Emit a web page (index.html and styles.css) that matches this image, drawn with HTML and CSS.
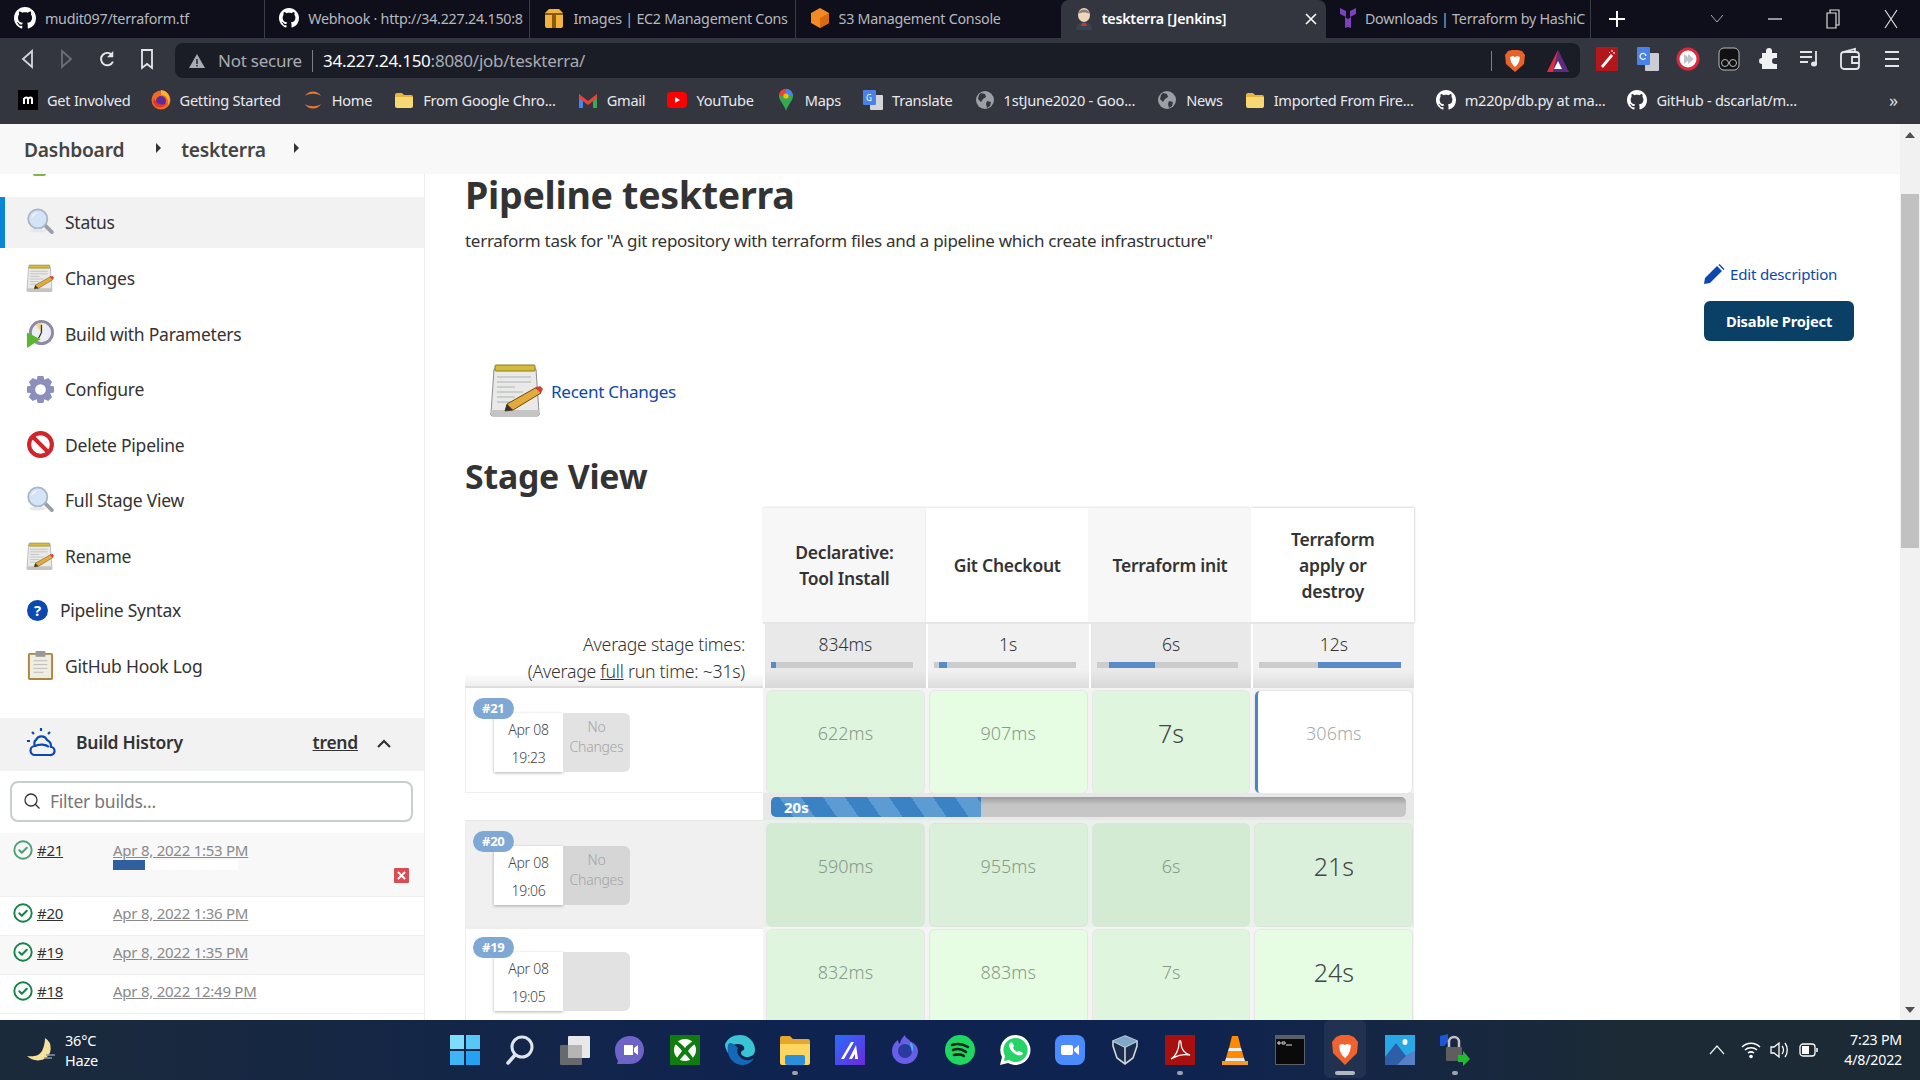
FILE: index.html
```html
<!DOCTYPE html>
<html lang="en">
<head>
<meta charset="utf-8">
<title>teskterra [Jenkins]</title>
<link rel="stylesheet" href="styles.css">
</head>
<body>
<svg class="sprite" xmlns="http://www.w3.org/2000/svg">
  <symbol id="gh" viewBox="0 0 16 16"><path fill="#fff" d="M8 0C3.58 0 0 3.58 0 8c0 3.54 2.29 6.53 5.47 7.59.4.07.55-.17.55-.38 0-.19-.01-.82-.01-1.49-2.01.37-2.53-.49-2.69-.94-.09-.23-.48-.94-.82-1.13-.28-.15-.68-.52-.01-.53.63-.01 1.08.58 1.23.82.72 1.21 1.87.87 2.33.66.07-.52.28-.87.51-1.07-1.78-.2-3.64-.89-3.64-3.95 0-.87.31-1.59.82-2.15-.08-.2-.36-1.02.08-2.12 0 0 .67-.21 2.2.82.64-.18 1.32-.27 2-.27.68 0 1.36.09 2 .27 1.53-1.04 2.2-.82 2.2-.82.44 1.1.16 1.92.08 2.12.51.56.82 1.27.82 2.15 0 3.07-1.87 3.75-3.65 3.95.29.25.54.73.54 1.48 0 1.07-.01 1.93-.01 2.2 0 .21.15.46.55.38A8.013 8.013 0 0016 8c0-4.42-3.58-8-8-8z"/></symbol>
  <symbol id="folder" viewBox="0 0 20 20"><path fill="#e8b63e" d="M1 5a2 2 0 012-2h5l2 2h7a2 2 0 012 2v1H1z"/><path fill="#f8d775" d="M1 7h18v9a2 2 0 01-2 2H3a2 2 0 01-2-2z"/></symbol>
  <symbol id="globe" viewBox="0 0 20 20"><circle cx="10" cy="10" r="9" fill="#9aa0a6"/><path fill="#33363f" d="M6 3l4 1 1 3-3 2-2 3-3-3 1-4zM12 11l4 1-1 4-3 2-1-4z"/></symbol>
  <symbol id="magnifier" viewBox="0 0 32 32"><path d="M19 20l3-3 8 8c1 1 1 2 0 3s-2 1-3 0z" fill="#9a9fa8"/><circle cx="13" cy="12" r="10.5" fill="#d4e4f7" stroke="#a8b6c8" stroke-width="2"/><path d="M6 11a7 7 0 017-6c-3 2-5 3-7 6z" fill="#fff"/><ellipse cx="13" cy="25" rx="9" ry="2" fill="#e8e8e8"/></symbol>
  <symbol id="notepad" viewBox="0 0 56 56"><path d="M5 6h42l3 44a2 2 0 01-2 3H4a2 2 0 01-2-3z" fill="#e9e9e7" stroke="#8c8c8c"/><path d="M2 47h48v4a2 2 0 01-2 2H4a2 2 0 01-2-2z" fill="#c4c4c4"/><rect x="6" y="2" width="40" height="6" rx="1" fill="#d4bb3a" stroke="#8c7a20"/><path d="M8 14h34M8 19h34M8 24h18M8 29h26M8 34h18M8 39h14" stroke="#aeb2b6" stroke-width="1.2"/><path d="M18 41l30-17 4 6-28 17-8 1z" fill="#e2ab3b" stroke="#6a4b12"/><path d="M46 25l5-2 3 3-2 4z" fill="#d93a32"/><path d="M16 48l2-7 6 6z" fill="#333"/></symbol>
  <symbol id="check" viewBox="0 0 20 20"><circle cx="10" cy="10" r="8.7" fill="none" stroke="#138347" stroke-width="1.9"/><path d="M6.3 10.3l2.5 2.5 5-5" fill="none" stroke="#138347" stroke-width="2" stroke-linecap="round" stroke-linejoin="round"/></symbol>
</svg>

<header class="chrome">
  <div class="tabs">
    <div class="tab"><svg class="fav" width="22" height="22"><use href="#gh"/></svg><span class="tab-title">mudit097/terraform.tf</span></div>
    <div class="tab"><svg class="fav" width="20" height="20"><use href="#gh"/></svg><span class="tab-title">Webhook · http://34.227.24.150:8</span></div>
    <div class="tab"><svg class="fav" width="20" height="22" viewBox="0 0 20 22"><path fill="#f2b33d" d="M1 6l4-4h10l4 4v13a2 2 0 01-2 2H3a2 2 0 01-2-2z"/><path fill="#8a5a12" d="M8 6h4v15H8zM1 6h18v2H1z"/></svg><span class="tab-title">Images | EC2 Management Cons</span></div>
    <div class="tab"><svg class="fav" width="20" height="22" viewBox="0 0 20 22"><path fill="#f28a24" d="M10 1l9 5v10l-9 5-9-5V6z"/><path fill="#d96a10" d="M10 11l9-5v10l-9 5z"/></svg><span class="tab-title">S3 Management Console</span></div>
    <div class="tab tab-active"><svg class="fav" width="18" height="22" viewBox="0 0 18 22"><ellipse cx="9" cy="7" rx="6" ry="7" fill="#f0d6b8"/><path d="M3 6c1-6 11-6 12 0-3-2-9-2-12 0z" fill="#8a8078"/><path d="M1 22c0-6 4-8 8-8s8 2 8 8z" fill="#39424f"/><path d="M7 15h4l1 3H6z" fill="#c8383a"/></svg><span class="tab-title tab-title-active">teskterra [Jenkins]</span><svg class="tab-close" width="12" height="12" viewBox="0 0 12 12"><path d="M1 1l10 10M11 1L1 11" stroke="#fff" stroke-width="1.6"/></svg></div>
    <div class="tab"><svg class="fav" width="16" height="22" viewBox="0 0 16 22"><path fill="#7b42bc" d="M0 1l6 3v6L0 7zM16 1l-6 3v6l6-3zM5 10l3 2 3-2v11l-3-1-3 1z"/></svg><span class="tab-title">Downloads | Terraform by HashiC</span></div>
    <div class="tab-new"><svg width="18" height="18" viewBox="0 0 18 18"><path d="M9 1v16M1 9h16" stroke="#fff" stroke-width="2"/></svg></div>
    <div class="win-controls">
      <svg class="wc" width="14" height="10" viewBox="0 0 14 10"><path d="M1 1l6 7 6-7" fill="none" stroke="#aaa"/></svg>
      <svg class="wc" width="14" height="10" viewBox="0 0 14 10"><path d="M0 5h14" stroke="#ddd" stroke-width="1.3"/></svg>
      <svg class="wc" width="14" height="22" viewBox="0 0 14 22"><path d="M1 5h9v15H1zM4 5V2h9v15h-3" fill="none" stroke="#ddd" stroke-width="1.2"/></svg>
      <svg class="wc" width="14" height="22" viewBox="0 0 14 22"><path d="M1 2l12 18M13 2L1 20" stroke="#ddd" stroke-width="1.2"/></svg>
    </div>
  </div>

  <div class="toolbar">
    <div class="nav">
      <svg width="12" height="20" viewBox="0 0 12 20"><path d="M11 2L2 10l9 8z" fill="none" stroke="#d5d7dc" stroke-width="1.8"/></svg>
      <svg width="12" height="20" viewBox="0 0 12 20"><path d="M1 2l9 8-9 8z" fill="none" stroke="#6c6f78" stroke-width="1.8"/></svg>
      <svg width="18" height="20" viewBox="0 0 18 20"><path d="M15 6a7 7 0 10.7 7" fill="none" stroke="#e5e6ea" stroke-width="2.2"/><path d="M16 1v7h-7z" fill="#e5e6ea"/></svg>
      <svg width="14" height="22" viewBox="0 0 14 22"><path d="M2 2h10v18l-5-4-5 4z" fill="none" stroke="#e5e6ea" stroke-width="1.8"/></svg>
    </div>
    <div class="omnibox">
      <svg width="16" height="16" viewBox="0 0 16 16"><path d="M8 1l8 14H0z" fill="#a9acb2"/><path d="M7.3 6h1.4v5H7.3zM7.3 12h1.4v1.4H7.3z" fill="#1b1d26"/></svg>
      <span class="not-secure">Not secure</span>
      <span class="omni-sep"></span>
      <span class="url"><span class="url-host">34.227.24.150</span>:8080/job/teskterra/</span>
      <span class="omni-sep omni-sep-right"></span>
      <svg class="brave" width="20" height="24" viewBox="0 0 20 24"><path d="M3 2l4-1h6l4 1 3 4-1 9-9 8-9-8-1-9z" fill="#e8622a"/><path d="M5 8l3-1 2 1 2-1 3 1-1 5-2 3-2 2-2-2-2-3z" fill="#fff"/></svg>
      <svg width="22" height="24" viewBox="0 0 22 24"><path d="M11 1l11 22H0z" fill="#5a2d7f"/><path d="M11 1L0 23h6z" fill="#e12d3e"/><path d="M11 12l4 8H7z" fill="#fff"/></svg>
    </div>
    <div class="ext">
      <svg width="22" height="24" viewBox="0 0 22 24"><rect width="22" height="24" rx="1" fill="#b3161b"/><path d="M5 19L15 7l2 2L7 21z" fill="#fff"/><path d="M16 3v2M19 6h-2M13 5l1 1" stroke="#fff"/></svg>
      <svg width="22" height="24" viewBox="0 0 22 24"><rect x="8" y="6" width="14" height="18" rx="1" fill="#c9ccd2"/><rect width="13" height="18" rx="1" fill="#4a82e8"/><path d="M9 9a3 3 0 10-.5 2" fill="none" stroke="#fff" stroke-width="1.2"/></svg>
      <svg width="22" height="24" viewBox="0 0 22 24"><circle cx="11" cy="12" r="10" fill="#fff" stroke="#d82c3e" stroke-width="3"/><path d="M7 7l6 5-6 5zM11 7l6 5-6 5z" fill="#c0c3c9"/></svg>
      <svg width="22" height="24" viewBox="0 0 22 24"><rect x="1" y="1" width="20" height="22" rx="5" fill="#111" stroke="#b7bac0"/><circle cx="7" cy="16" r="3.5" fill="none" stroke="#b7bac0"/><circle cx="15" cy="16" r="3.5" fill="none" stroke="#b7bac0"/></svg>
      <svg width="20" height="22" viewBox="0 0 20 22"><path d="M7 3a3 3 0 016 0v2h5v5h-2a3 3 0 000 6h2v5H3v-5a3 3 0 010-6V5h4z" fill="#f0f1f3"/></svg>
      <svg width="20" height="20" viewBox="0 0 20 20"><path d="M0 3h12M0 8h12M0 13h8" stroke="#e5e6ea" stroke-width="1.8"/><path d="M16 2v13" stroke="#e5e6ea" stroke-width="1.8"/><ellipse cx="14" cy="15" rx="3" ry="2.5" fill="#e5e6ea"/></svg>
      <svg width="20" height="22" viewBox="0 0 20 22"><rect x="1" y="4" width="18" height="17" rx="3" fill="none" stroke="#e5e6ea" stroke-width="1.8"/><path d="M3 4l12-3v3M19 9h-7v6h7" fill="none" stroke="#e5e6ea" stroke-width="1.8"/></svg>
    </div>
    <svg class="menu" width="14" height="20" viewBox="0 0 14 20"><path d="M0 3h14M0 10h14M0 17h14" stroke="#e5e6ea" stroke-width="1.8"/></svg>
  </div>

  <nav class="bookmarks">
    <div class="bm"><svg class="bm-ic" width="20" height="20" viewBox="0 0 20 20"><rect width="20" height="20" fill="#000"/><path d="M4 14V8m0 1c1-2 4-2 4 0v5m0-5c1-2 4-2 4 0v5" transform="translate(2 0)" fill="none" stroke="#fff" stroke-width="2"/></svg><span>Get Involved</span></div>
    <div class="bm"><svg class="bm-ic" width="20" height="22" viewBox="0 0 20 22"><circle cx="10" cy="11" r="9.5" fill="#f26a25"/><path d="M10 1a9.5 9.5 0 017 15c1-6-2-10-7-10z" fill="#ffb02e"/><circle cx="10" cy="12" r="5" fill="#5a2d9f"/><path d="M3 9c2 6 8 8 13 5-3 6-12 6-14-1z" fill="#e0362f"/></svg><span>Getting Started</span></div>
    <div class="bm"><svg class="bm-ic" width="20" height="22" viewBox="0 0 20 22"><path d="M2 7c3-6 13-6 16 0-4-3-12-3-16 0zM2 15c4 3 12 3 16 0-3 6-13 6-16 0z" fill="#e5772f"/></svg><span>Home</span></div>
    <div class="bm"><svg class="bm-ic" width="20" height="20"><use href="#folder"/></svg><span>From Google Chro...</span></div>
    <div class="bm"><svg class="bm-ic" width="20" height="16" viewBox="0 0 20 16"><path d="M1 2v14h4V7z" fill="#4285f4"/><path d="M19 2v14h-4V7z" fill="#34a853"/><path d="M1 2l9 7 9-7v4l-9 7-9-7z" fill="#ea4335"/></svg><span>Gmail</span></div>
    <div class="bm"><svg class="bm-ic" width="20" height="16" viewBox="0 0 20 16"><rect width="20" height="16" rx="4" fill="#f00"/><path d="M8 5l5 3-5 3z" fill="#fff"/></svg><span>YouTube</span></div>
    <div class="bm"><svg class="bm-ic" width="20" height="22" viewBox="-3 0 20 22"><path d="M7 0a7 7 0 017 7c0 5-5 8-7 15C5 15 0 12 0 7a7 7 0 017-7z" fill="#34a853"/><path d="M0 7a7 7 0 0112-5L7 7z" fill="#ea4335"/><path d="M7 0a7 7 0 017 7H7z" fill="#4285f4"/><circle cx="7" cy="7" r="2.6" fill="#fbbc04"/></svg><span>Maps</span></div>
    <div class="bm"><svg class="bm-ic" width="20" height="20" viewBox="0 0 20 20"><rect x="7" y="5" width="13" height="15" rx="1" fill="#d2d5da"/><rect width="13" height="15" rx="1" fill="#4a82e8"/><text x="3" y="11" class="svg-g">G</text></svg><span>Translate</span></div>
    <div class="bm"><svg class="bm-ic" width="20" height="20"><use href="#globe"/></svg><span>1stJune2020 - Goo...</span></div>
    <div class="bm"><svg class="bm-ic" width="20" height="20"><use href="#globe"/></svg><span>News</span></div>
    <div class="bm"><svg class="bm-ic" width="20" height="20"><use href="#folder"/></svg><span>Imported From Fire...</span></div>
    <div class="bm"><svg class="bm-ic" width="20" height="22"><use href="#gh"/></svg><span>m220p/db.py at ma...</span></div>
    <div class="bm"><svg class="bm-ic" width="20" height="22"><use href="#gh"/></svg><span>GitHub - dscarlat/m...</span></div>
    <div class="bm-more">»</div>
  </nav>
</header>

<div class="viewport">
  <div class="page">
    <div class="breadcrumb">
      <a class="crumb">Dashboard</a><span class="crumb-arrow"></span>
      <a class="crumb">teskterra</a><span class="crumb-arrow"></span>
    </div>
    <div class="content">
      <aside class="sidebar">
        <div class="sliver"></div>
        <ul class="tasks">
          <li class="task task-active"><svg class="task-ic" viewBox="0 0 32 32"><use href="#magnifier"/></svg>Status</li>
          <li class="task"><svg class="task-ic" viewBox="0 0 56 56"><use href="#notepad"/></svg>Changes</li>
          <li class="task"><svg class="task-ic" viewBox="0 0 30 30"><circle cx="16" cy="14" r="13" fill="#8d8aa5"/><circle cx="16" cy="14" r="10" fill="#eeedf3"/><path d="M16 14V4a10 10 0 00-6 2z" fill="#f2d77c"/><path d="M16 14l-3 6M16 14V6" stroke="#333" stroke-width="1.3"/><path d="M1 14l14 7-14 9z" fill="#5bb52e"/></svg>Build with Parameters</li>
          <li class="task"><svg class="task-ic" viewBox="0 0 30 30"><path d="M12 1h6l1 4 4-2 4 4-2 4 4 1v6l-4 1 2 4-4 4-4-2-1 4h-6l-1-4-4 2-4-4 2-4-4-1v-6l4-1-2-4 4-4 4 2z" fill="#8a90bb"/><circle cx="15" cy="15" r="5.5" fill="#fff"/></svg>Configure</li>
          <li class="task"><svg class="task-ic" viewBox="0 0 28 28"><circle cx="14" cy="14" r="11" fill="#fff" stroke="#d0262b" stroke-width="4"/><path d="M7 7l14 14" stroke="#d0262b" stroke-width="4"/></svg>Delete Pipeline</li>
          <li class="task"><svg class="task-ic" viewBox="0 0 32 32"><use href="#magnifier"/></svg>Full Stage View</li>
          <li class="task"><svg class="task-ic" viewBox="0 0 56 56"><use href="#notepad"/></svg>Rename</li>
          <li class="task task-syntax"><svg class="task-ic-small" width="21" height="21" viewBox="0 0 21 21"><circle cx="10.5" cy="10.5" r="10.5" fill="#0b48b0"/><text x="10.5" y="15.5" text-anchor="middle" class="svg-q">?</text></svg>Pipeline Syntax</li>
          <li class="task"><svg class="task-ic" viewBox="0 0 28 30"><rect x="2" y="3" width="24" height="26" rx="1" fill="#f1ece0" stroke="#a98544" stroke-width="2"/><rect x="9" y="0" width="10" height="6" fill="#999"/><path d="M7 10h14M7 14h14M7 18h14M7 22h10" stroke="#bbb"/></svg>GitHub Hook Log</li>
        </ul>
        <section class="history">
          <div class="history-head">
            <svg class="hist-ic" width="30" height="30" viewBox="0 0 30 30"><g fill="none" stroke="#0b48b0" stroke-width="2.2" stroke-linejoin="round"><path d="M9 28h15a4 4 0 001-8 7 7 0 00-4-7 6 6 0 00-11 0c-2 1-2 4-1 6a4.500 4.500 0 000 9z"/><path d="M9 19a9 5 0 0114 1"/></g><path d="M15 1v3M6 5l2 2M24 5l-2 2M1 14h3" stroke="#0b48b0" stroke-width="2.2"/></svg>
            <span class="hist-title">Build History</span>
            <a class="hist-trend">trend</a>
            <svg class="hist-chevron" width="14" height="10" viewBox="0 0 14 10"><path d="M1 8l6-6 6 6" fill="none" stroke="#333" stroke-width="2.2"/></svg>
          </div>
          <div class="filter-wrap">
            <div class="filter">
              <svg width="16" height="16" viewBox="0 0 16 16"><circle cx="7" cy="7" r="6" fill="none" stroke="#333" stroke-width="1.3"/><path d="M11.300 11.300L15.500 15.500" stroke="#333" stroke-width="1.3"/></svg>
              <span>Filter builds...</span>
            </div>
          </div>
          <div class="build build-first">
            <svg class="b-check b-check-faded" width="20" height="20"><use href="#check"/></svg>
            <a class="b-num">#21</a>
            <div class="b-meta">
              <a class="b-date">Apr 8, 2022 1:53 PM</a>
              <div class="b-progress"><div class="b-progress-fill"></div></div>
            </div>
            <svg class="b-stop" width="15" height="15" viewBox="0 0 15 15"><rect width="15" height="15" rx="1" fill="#d94c52"/><path d="M4 4l7 7M11 4l-7 7" stroke="#fff" stroke-width="2"/></svg>
          </div>
          <div class="build"><svg class="b-check" width="20" height="20"><use href="#check"/></svg><a class="b-num">#20</a><div class="b-meta"><a class="b-date">Apr 8, 2022 1:36 PM</a></div></div>
          <div class="build build-alt"><svg class="b-check" width="20" height="20"><use href="#check"/></svg><a class="b-num">#19</a><div class="b-meta"><a class="b-date">Apr 8, 2022 1:35 PM</a></div></div>
          <div class="build"><svg class="b-check" width="20" height="20"><use href="#check"/></svg><a class="b-num">#18</a><div class="b-meta"><a class="b-date">Apr 8, 2022 12:49 PM</a></div></div>
        </section>
      </aside>

      <main class="main">
        <h1 class="title">Pipeline teskterra</h1>
        <p class="desc">terraform task for "A git repository with terraform files and a pipeline which create infrastructure"</p>
        <div class="actions">
          <a class="edit"><svg width="20" height="20" viewBox="0 0 20 20"><path d="M0 20l1-6L13 2l5 5L6 19z" fill="#0b48b0"/><path d="M14.500 1l1-1 5 5-1 1z" fill="#0b48b0"/></svg>Edit description</a>
          <button class="disable">Disable Project</button>
        </div>
        <div class="recent"><svg width="56" height="56"><use href="#notepad"/></svg><a>Recent Changes</a></div>
        <h2 class="stage-title">Stage View</h2>
        <div class="stage">
          <div class="s-blank"></div>
          <div class="s-head s-odd">Declarative:<br>Tool Install</div>
          <div class="s-head">Git Checkout</div>
          <div class="s-head s-odd">Terraform init</div>
          <div class="s-head">Terraform<br>apply or<br>destroy</div>

          <div class="s-label">Average stage times:<br>(Average <u>full</u> run time: ~31s)</div>
          <div class="s-avg s-avg-odd"><span>834ms</span><div class="avg-bar"><i style="margin-left:0;width:3.500%"></i></div></div>
          <div class="s-avg"><span>1s</span><div class="avg-bar"><i style="margin-left:4%;width:5%"></i></div></div>
          <div class="s-avg s-avg-odd"><span>6s</span><div class="avg-bar"><i style="margin-left:9%;width:32%"></i></div></div>
          <div class="s-avg"><span>12s</span><div class="avg-bar"><i style="margin-left:41%;width:59%"></i></div></div>

          <div class="s-build"><div class="card"><span class="badge">#21</span><div class="card-date">Apr 08<br>19:23</div><div class="card-changes">No<br>Changes</div></div></div>
          <div class="s-wrap"><div class="cell">622ms</div></div>
          <div class="s-wrap"><div class="cell cell-even">907ms</div></div>
          <div class="s-wrap"><div class="cell cell-big">7s</div></div>
          <div class="s-wrap"><div class="cell cell-run">306ms</div></div>

          <div class="s-pad"></div>
          <div class="s-progress"><div class="run-bar"><div class="run-fill">20s</div></div></div>

          <div class="s-build s-build-grey"><div class="card"><span class="badge">#20</span><div class="card-date">Apr 08<br>19:06</div><div class="card-changes card-changes-grey">No<br>Changes</div></div></div>
          <div class="s-wrap s-wrap-grey"><div class="cell cell-dim">590ms</div></div>
          <div class="s-wrap s-wrap-grey"><div class="cell cell-dim cell-dim-even">955ms</div></div>
          <div class="s-wrap s-wrap-grey"><div class="cell cell-dim">6s</div></div>
          <div class="s-wrap s-wrap-grey"><div class="cell cell-dim cell-dim-even cell-big">21s</div></div>

          <div class="s-build s-build-sep"><div class="card"><span class="badge">#19</span><div class="card-date">Apr 08<br>19:05</div><div class="card-changes"></div></div></div>
          <div class="s-wrap"><div class="cell">832ms</div></div>
          <div class="s-wrap"><div class="cell cell-even">883ms</div></div>
          <div class="s-wrap"><div class="cell">7s</div></div>
          <div class="s-wrap"><div class="cell cell-even cell-big">24s</div></div>
        </div>
      </main>
    </div>
  </div>
  <div class="scrollbar">
    <span class="sb-up"></span>
    <div class="sb-thumb"></div>
    <span class="sb-down"></span>
  </div>
</div>

<footer class="taskbar">
  <div class="tb-left">
    <svg width="30" height="26" viewBox="0 0 30 26"><path d="M19 1a12 12 0 01-1 21c-6 3-13 1-17-3 6 1 12 0 15-5 2-4 3-9 3-13z" fill="#f6e09a"/><path d="M20 18h9M18 21h8" stroke="#8d97a5" stroke-width="1.500"/></svg>
    <div class="weather"><span>36°C</span><span>Haze</span></div>
  </div>
  <div class="tb-center">
    <svg width="30" height="30" viewBox="0 0 30 30"><path d="M0 0h14v14H0z" fill="#7fdcfb"/><path d="M16 0h14v14H16z" fill="#56c8f8"/><path d="M0 16h14v14H0z" fill="#3fb5f5"/><path d="M16 16h14v14H16z" fill="#22a2f0"/></svg>
    <svg width="30" height="30" viewBox="0 0 30 30"><circle cx="17" cy="12" r="10" fill="none" stroke="#dfe5ee" stroke-width="3"/><path d="M10 20L3 28" stroke="#dfe5ee" stroke-width="3.500" stroke-linecap="round"/></svg>
    <svg width="30" height="30" viewBox="0 0 30 30"><rect x="8" y="1" width="22" height="22" rx="1" fill="#e8e8e8"/><rect y="10" width="22" height="20" rx="1" fill="#717171" opacity=".9"/><rect x="8" y="10" width="14" height="13" fill="#b5b5b5"/></svg>
    <svg width="30" height="30" viewBox="0 0 30 30"><path d="M15 1c8 0 14 6 14 14s-6 14-14 14H2l1-3c-2-3-3-7-3-11C0 7 7 1 15 1z" fill="#6d63c9"/><path d="M9 10h9v10H9zM19 13l4-3v10l-4-3z" fill="#fff"/></svg>
    <svg width="30" height="30" viewBox="0 0 30 30"><rect width="30" height="30" fill="#107c10"/><circle cx="15" cy="15" r="11" fill="#fff"/><path d="M7 6c3 2 6 4 8 7 2-3 5-5 8-7l2 3c-3 2-5 4-7 7 2 3 5 6 6 9l-3 1c-2-3-4-5-6-7-2 2-4 4-6 7l-3-1c1-3 4-6 6-9-2-3-4-5-7-7z" fill="#107c10"/></svg>
    <svg width="30" height="30" viewBox="0 0 30 30"><path d="M15 0a15 15 0 0115 15c0 5-4 7-8 7-3 0-6-2-6-4s2-3 3-3c1-3-1-6-6-6C6 9 3 13 3 18c-2-3-3-6-3-9C3 3 8 0 15 0z" fill="#3bc3d6"/><path d="M3 10C1 20 7 30 18 30c5 0 9-3 11-7-4 3-9 3-13 0-3-3-5-6-3-10C7 7 4 7 3 10z" fill="#1568b8"/></svg>
    <span class="tb-slot"><svg width="30" height="30" viewBox="0 0 30 30"><path d="M0 3a2 2 0 012-2h8l3 3h15a2 2 0 012 2v4H0z" fill="#e7a52c"/><path d="M0 9h30v19a2 2 0 01-2 2H2a2 2 0 01-2-2z" fill="#fbd661"/><rect x="5" y="20" width="20" height="10" rx="2" fill="#2b8fdc"/></svg><i class="tb-dot"></i></span>
    <svg width="30" height="30" viewBox="0 0 30 30"><defs><linearGradient id="msg" x1="0" y1="0" x2="1" y2="1"><stop offset="0" stop-color="#2a6cff"/><stop offset="1" stop-color="#6b2bd9"/></linearGradient></defs><rect width="30" height="30" fill="url(#msg)"/><path d="M6 24L16 7h3L9 24zM14 24l7-14 2 14h-3v-5l-3 5z" fill="#fff"/></svg>
    <svg width="30" height="30" viewBox="0 0 30 30"><path d="M15 0c0 3 4 4 6 7 4 1 7 5 7 9a13 13 0 01-26 0c0-5 3-9 6-11 0 2 1 3 2 4 0-3 2-6 5-9z" fill="#6a5ee8"/><circle cx="15" cy="16" r="7" fill="#2b3a9f"/><path d="M21 7c2 3 3 6 1 10l-2-8z" fill="#3bb8f0"/></svg>
    <svg width="30" height="30" viewBox="0 0 30 30"><circle cx="15" cy="15" r="15" fill="#1ed760"/><path d="M7 10c6-2 11-1 16 2M8 15c5-2 9-1 13 2M9 20c4-1 7-1 10 1" fill="none" stroke="#10241a" stroke-width="2.600" stroke-linecap="round"/></svg>
    <svg width="30" height="30" viewBox="0 0 30 30"><path d="M15 0a15 15 0 11-7 28L0 30l2-8A15 15 0 0115 0z" fill="#fff"/><path d="M15 3a12 12 0 11-6 22l-5 1 1-5A12 12 0 0115 3z" fill="#25d366"/><path d="M10 8l2-1 2 4-1 2c1 2 3 3 4 4l2-1 4 2-1 2c-6 2-13-5-13-10z" fill="#fff"/></svg>
    <svg width="30" height="30" viewBox="0 0 30 30"><rect width="30" height="30" rx="8" fill="#4a8cff"/><rect x="6" y="10" width="12" height="10" rx="2" fill="#fff"/><path d="M19 14l5-4v10l-5-4z" fill="#fff"/></svg>
    <svg width="30" height="30" viewBox="0 0 30 30"><path d="M15 1l12 5v5l-4 12-8 6-8-6-4-12V6z" fill="#1d2b4b" stroke="#cfd6de" stroke-width="1.600"/><path d="M3 6l12 6 12-6M15 12v17" stroke="#cfd6de" stroke-width="1.600" fill="none"/><path d="M15 1l12 5-12 6L3 6z" fill="#7fa8c9"/></svg>
    <span class="tb-slot"><svg width="30" height="30" viewBox="0 0 30 30"><rect width="30" height="30" fill="#a80f0f"/><path d="M6 24c4-2 8-9 8-16 0-3 2-3 2 0 0 6 3 10 9 12-6-1-12 0-19 4z" fill="none" stroke="#fff" stroke-width="1.300"/></svg><i class="tb-dot"></i></span>
    <svg width="30" height="30" viewBox="0 0 30 30"><path d="M12 1h6l3 12H9z" fill="#ff8a00"/><path d="M8 16h14l2 7H6z" fill="#ff8a00"/><path d="M9 13h12l1 3H8z" fill="#eee"/><path d="M6 23h18l1 3H5z" fill="#eee"/><path d="M2 26h26v4H2z" fill="#f59a1c"/></svg>
    <svg width="30" height="30" viewBox="0 0 30 30"><rect width="30" height="30" fill="#5b6068"/><rect x="1" y="4" width="28" height="25" fill="#0a0a0a"/><path d="M3 7h2v2H3zM7 7h3v2H7zM11 10h6" stroke="#ddd" stroke-width="1"/></svg>
    <span class="tb-slot tb-active"><svg width="26" height="30" viewBox="0 0 26 30"><path d="M4 2l5-2h8l5 2 4 5-1 11-12 12L1 18 0 7z" fill="#f05a22"/><path d="M7 10l4-1 2 1 2-1 4 1-1 6-2 4-3 3-3-3-2-4z" fill="#fff"/></svg><i class="tb-bar"></i></span>
    <svg width="30" height="30" viewBox="0 0 30 30"><rect width="30" height="30" fill="#29a8e8"/><path d="M0 30V22L11 8l10 13 9-5v14z" fill="#2e5ea8"/><path d="M21 21l9-5v14H12z" fill="#5880c8"/><ellipse cx="20" cy="7" rx="2.500" ry="3" fill="#fff"/></svg>
    <span class="tb-slot"><svg width="30" height="32" viewBox="0 0 30 32"><path d="M0 2l8-2v8l-4 4H0z" fill="#1e56d8"/><path d="M9 13V8a5 5 0 0110 0v5" fill="none" stroke="#c4c4c4" stroke-width="2.500"/><rect x="6" y="13" width="16" height="14" rx="1" fill="#5e5e5e"/><path d="M18 21h5v-4l7 8-7 7v-4h-5z" fill="#1fbf2c"/></svg><i class="tb-dot"></i></span>
  </div>
  <div class="tb-right">
    <svg class="tray-chevron" width="16" height="10" viewBox="0 0 16 10"><path d="M1 9l7-8 7 8" fill="none" stroke="#eee" stroke-width="1.200"/></svg>
    <svg width="20" height="20" viewBox="0 0 20 20"><path d="M1 7c5-5 13-5 18 0M4 10c3-3 9-3 12 0M7 13c2-1.500 4-1.500 6 0" fill="none" stroke="#fff" stroke-width="1.500"/><circle cx="10" cy="16.500" r="1.800" fill="#fff"/></svg>
    <svg width="20" height="20" viewBox="0 0 20 20"><path d="M1 7h3l5-4v14l-5-4H1z" fill="none" stroke="#fff" stroke-width="1.300"/><path d="M12 6c2 2 2 6 0 8M15 3c3 4 3 10 0 14" fill="none" stroke="#fff" stroke-width="1.300"/></svg>
    <svg width="20" height="14" viewBox="0 0 20 14"><rect x="1" y="1" width="15" height="12" rx="3" fill="none" stroke="#fff" stroke-width="1.300"/><rect x="3" y="3" width="7" height="8" fill="#fff"/><path d="M18 5v4" stroke="#fff" stroke-width="1.500"/></svg>
    <div class="clock"><span>7:23 PM</span><span>4/8/2022</span></div>
  </div>
</footer>
</body>
</html>
```

FILE: styles.css
```css
* { box-sizing: border-box; }
html, body { margin: 0; padding: 0; }
body {
  width: 1920px;
  height: 1080px;
  overflow: hidden;
  display: flex;
  flex-direction: column;
  font-family: "Noto Sans", "Open Sans", sans-serif;
  color: #333;
  background: #fff;
}
.sprite { display: block; width: 0; height: 0; overflow: hidden; }
a { color: inherit; }
ul { list-style: none; margin: 0; padding: 0; }
svg { overflow: visible; }

/* browser chrome */
.chrome { flex: none; background: #33363f; color: #e9eaee; }
.tabs { height: 38px; background: #0e0f1a; display: flex; align-items: stretch; font-size: 14.3px; letter-spacing: -.25px; }
.tab { width: 265.2px; display: flex; align-items: center; gap: 9px; padding: 0 0 2px 14px; position: relative; color: #b6b8bf; border-right: 1px solid #3a3c46; }
.tab:nth-child(4), .tab-active { border-right: 0; }
.fav { flex: none; }
.tab-title { flex: 1; white-space: nowrap; overflow: hidden; margin-right: 2px; }
.tab-active { background: #33363f; border-radius: 8px 8px 0 0; padding-bottom: 0; }
.tab-title-active { color: #fff; font-weight: 600; margin-bottom: 2px; }
.tab-close { flex: none; margin-right: 9px; }
.tab-new { width: 52px; display: flex; align-items: center; justify-content: center; }
.win-controls { flex: 1; display: flex; align-items: center; justify-content: flex-end; gap: 44px; padding-right: 22px; }

.toolbar { height: 42px; display: flex; align-items: center; padding: 0 21px 0 0; }
.nav { width: 175px; display: flex; align-items: center; padding-left: 19px; gap: 24px; }
.nav svg { width: 16px; }
.omnibox { width: 1405px; height: 35px; margin-top: 3px; background: #1b1d26; border-radius: 8px; display: flex; align-items: center; padding: 0 11px 0 14px; font-size: 17px; letter-spacing: -.25px; }
.not-secure { margin-left: 13px; color: #a9acb2; }
.omni-sep { width: 1px; height: 22px; background: #7c7f87; margin: 0 10px 0 10px; }
.url { color: #a9acb2; flex: 1; }
.url-host { color: #fff; }
.omni-sep-right { margin: 0 13px 0 0; height: 20px; }
.brave { margin-right: 22px; }
.ext { flex: 1; display: flex; align-items: center; gap: 18.5px; padding-left: 16px; }
.ext svg { width: 22px; }
.menu { flex: none; }

.bookmarks { height: 44px; padding: 0 0 4px 18px; display: flex; align-items: center; font-size: 14.6px; letter-spacing: -.25px; color: #e9eaee; white-space: nowrap; }
.bm { display: flex; align-items: center; gap: 9px; margin-right: 22px; }
.bm:nth-child(2) { margin-left: -2px; }
.bm-ic { flex: none; }
.bm-more { margin-left: auto; margin-right: 22px; font-size: 18px; color: #ddd; }
.svg-g { font-size: 8px; fill: #fff; font-family: "Noto Sans", sans-serif; }
.svg-q { font: 700 15px "Noto Sans", sans-serif; fill: #fff; }

/* page */
.viewport { flex: 1; min-height: 0; display: flex; overflow: hidden; }
.page { flex: 1; min-width: 0; min-height: 0; display: flex; flex-direction: column; }
.breadcrumb { flex: none; height: 50px; background: #f8f8f8; display: flex; align-items: center; padding: 1px 0 0 24px; font-size: 19.2px; font-weight: 600; letter-spacing: -.2px; color: #444; position: relative; z-index: 1; }
.crumb-arrow { width: 0; height: 0; border-left: 5px solid #333; border-top: 5px solid transparent; border-bottom: 5px solid transparent; margin: -3px 20px 0 32px; }
.crumb-arrow:last-child { margin-left: 28px; }
.content { flex: 1; min-height: 0; display: flex; }

.sidebar { flex: none; width: 425px; border-right: 1px solid #eee; font-size: 17.500px; letter-spacing: -.25px; }
.sliver { width: 13px; height: 2px; margin-left: 33px; margin-bottom: 21px; background: #7fb548; border-radius: 0 0 2px 2px; }
.task { height: 51px; margin-bottom: 4.6px; padding: 0 0 0 26px; display: flex; align-items: center; gap: 10px; color: #333; }
.task-active { background: #f2f2f2; border-left: 5px solid #0b85d8; padding: 0 0 1px 21px; }
.task-ic { flex: none; width: 29px; height: 29px; }
.task-syntax { margin-top: -1.5px; padding-left: 27px; gap: 12px; }
.task-ic-small { flex: none; }

.history { margin-top: 26.7px; }
.history-head { height: 53px; background: #f2f2f2; display: flex; align-items: center; padding: 0 0 4px 26px; }
.hist-ic { flex: none; margin-right: 20px; }
.hist-title { font-weight: 600; flex: 1; }
.hist-trend { font-weight: 600; text-decoration: underline; margin-right: 19px; }
.hist-chevron { margin: 4px 33px 0 0; }
.filter-wrap { padding: 10px 11px 11px 10px; }
.filter { height: 41px; border: 2px solid #c7ced0; border-radius: 8px; display: flex; align-items: center; padding-left: 12px; gap: 10px; color: #777; }
.build { height: 39px; display: flex; align-items: flex-start; padding: 6px 0 0 13px; font-size: 15px; border-bottom: 1px solid #f0f0f0; background: #fff; position: relative; }
.build-alt { background: #f8f8f8; }
.build-first { height: 64px; padding-top: 7px; background: #f8f8f8; }
.b-check { flex: none; margin: 0 4px 0 0; }
.b-check-faded { opacity: .75; }
.b-num { width: 76px; text-decoration: underline; color: #333; }
.b-date { text-decoration: underline; color: #8a8a8a; }
.b-progress { width: 125px; height: 10px; background: #fff; margin-top: 0; }
.b-progress-fill { width: 32px; height: 10px; background: #2f5f9f; }
.b-stop { position: absolute; left: 394px; top: 35px; }

/* main */
.main { flex: 1; min-width: 0; padding-left: 40px; display: flex; flex-direction: column; align-items: flex-start; }
.title { margin: 0; font-size: 37.6px; line-height: 42px; font-weight: 700; letter-spacing: -.3px; color: #333; white-space: nowrap; }
.desc { margin: 12px 0 0; font-size: 17px; line-height: 26px; letter-spacing: -.29px; color: #333; }
.actions { align-self: flex-end; width: 150px; margin: 8px 46px 0 0; display: flex; flex-direction: column; }
.edit { height: 23px; margin-bottom: 1px; display: flex; align-items: center; gap: 6px; font-size: 15.1px; letter-spacing: -.2px; color: #0b48b0; white-space: nowrap; }
.disable { margin-top: 15px; height: 40px; border: 0; border-radius: 6px; background: #0a3f66; color: #fff; font: 700 14.700px "Noto Sans", sans-serif; letter-spacing: -.2px; padding: 0; }
.recent { margin: 22px 0 0 24px; display: flex; align-items: center; gap: 6px; font-size: 17.1px; letter-spacing: -.3px; color: #0b48b0; }
.stage-title { margin: 35px 0 0; font-size: 33.8px; line-height: 44px; font-weight: 700; letter-spacing: -.2px; color: #333; }

.stage { margin-top: 10px; display: grid; grid-template-columns: 298px repeat(4, 162.8px); grid-template-rows: 116px 64px 105px 27px 107px 107px; font-size: 18px; position: relative; }
.s-head { display: flex; align-items: center; justify-content: center; text-align: center; font-weight: 600; font-size: 17.500px; line-height: 26px; letter-spacing: -.25px; background: #fff; border-bottom: 2px solid #e6e6e6; box-shadow: 0 -1px 2px rgba(0,0,0,.1); color: #333; }
.s-head:nth-child(5) { box-shadow: 1px -1px 2px rgba(0,0,0,.14); }
.s-odd { background: #f7f7f7; }
.s-label { text-align: right; padding: 7px 18px 0 0; font-weight: 300; font-size: 17.700px; line-height: 27px; letter-spacing: -.25px; color: #333; background: linear-gradient(#fff 80%, #eee); border-bottom: 2px solid #ddd; white-space: nowrap; }
.s-avg { background: linear-gradient(#f1f1f1 72%, #dcdcdc); border-left: 2px solid #fff; text-align: center; padding: 5px 13px 0 6px; font-weight: 300; font-size: 17.500px; line-height: 30px; color: #333; }
.s-avg span { display: block; margin-right: -7px; }
.s-avg-odd { background: linear-gradient(#e9e9e9 72%, #d8d8d8); }
.avg-bar { height: 6px; margin: 3px 0 0; background: #ccc; }
.avg-bar i { display: block; height: 6px; background: #5a8bc9; }
.s-build { padding: 25px 0 0 28px; border-bottom: 1px solid #eee; border-left: 1px solid #eee; }
.s-build-grey { background: #f0f0f0; padding-top: 25px; border-top: 1px solid #e6e6e6; }
.s-build-sep { padding-top: 23px; border-top: 2px solid #eee; }
.card { display: flex; width: 136px; height: 59px; position: relative; font-size: 14px; letter-spacing: -.25px; font-weight: 300; }
.badge { position: absolute; left: -21px; top: -15px; padding: 0 9px; height: 21px; border-radius: 11px; background: #7fa8d4; color: #fff; font-size: 13px; font-weight: 700; line-height: 21px; }
.card-date { width: 69px; background: #fff; box-shadow: 0 1px 3px rgba(0,0,0,.3); text-align: center; line-height: 28px; padding-top: 3px; font-size: 14px; color: #444; }
.card-changes { width: 67px; background: #e2e2e2; border-radius: 0 6px 6px 0; text-align: center; line-height: 20px; padding-top: 4px; font-size: 14px; color: #a5a5a5; }
.card-changes-grey { background: #d6d6d6; }
.s-wrap { background: #f4f4f4; padding: 3px 2px 0 4px; }
.s-wrap-grey { background: #eaf0ea; padding-top: 4px; }
.cell { height: 102px; border-radius: 5px; background: #dff5de; box-shadow: 0 0 1px 1px rgba(0,0,0,.06); display: flex; align-items: center; justify-content: center; padding-bottom: 18px; font-weight: 300; font-size: 18px; color: #8a9a8a; }
.cell-even { background: #e6fde4; }
.cell-big { font-size: 25px; color: #444; font-weight: 300; }
.cell-run { background: #fff; border-left: 3px solid #4a85c4; padding-right: 3px; color: #aaa; }
.cell-dim { background: #d2ebd2; }
.cell-dim-even { background: #daf0da; }
.s-pad { background: #fff; }
.s-progress { grid-column: 2 / 6; background: #e8e8e8; padding: 4px 8px 3px 8px; }
.run-bar { height: 20px; border-radius: 5px; background: linear-gradient(#9e9e9e, #c6c6c6 40%); overflow: hidden; }
.run-fill { width: 210px; height: 20px; padding-left: 13px; font-size: 15px; font-weight: 700; line-height: 20px; color: #fff; background: repeating-linear-gradient(55deg, #3b82c4 0 18px, #5d9cd3 18px 36px); }

/* scrollbar */
.scrollbar { flex: none; width: 20px; background: #f1f1f1; display: flex; flex-direction: column; align-items: center; }
.sb-up, .sb-down { width: 0; height: 0; border-left: 5px solid transparent; border-right: 5px solid transparent; }
.sb-up { border-bottom: 6px solid #505050; margin-top: 8px; }
.sb-down { border-top: 6px solid #505050; margin-top: auto; margin-bottom: 7px; }
.sb-thumb { width: 18px; height: 354px; margin-top: 56px; background: #c1c1c1; }

/* taskbar */
.taskbar { flex: none; height: 60px; display: grid; grid-template-columns: 1fr auto 1fr; align-items: center; background: linear-gradient(90deg, #1b2a3a 0%, #0f2350 40%, #0f2350 62%, #1c2a35 85%); color: #fff; position: relative; z-index: 2; }
.tb-left { display: flex; align-items: center; gap: 9px; padding-left: 26px; }
.weather { display: flex; flex-direction: column; font-size: 14.500px; line-height: 20px; letter-spacing: -.2px; }
.tb-center { display: flex; align-items: center; gap: 25px; }
.tb-slot { position: relative; width: 30px; height: 32px; display: flex; align-items: center; justify-content: center; }
.tb-dot { position: absolute; left: 12px; bottom: -9px; width: 6px; height: 4px; border-radius: 2px; background: #9aa3ad; }
.tb-active::before { content: ""; position: absolute; left: -6px; right: -6px; top: -14px; bottom: -12px; border-radius: 6px; background: rgba(255,255,255,.06); }
.tb-bar { position: absolute; left: 5px; bottom: -9px; width: 20px; height: 4px; border-radius: 2px; background: #b0b8c0; }
.tb-right { display: flex; align-items: center; justify-content: flex-end; gap: 9px; padding-right: 18px; }
.tray-chevron { margin-right: 7px; }
.clock { display: flex; flex-direction: column; align-items: flex-end; margin-left: 16px; font-size: 14.200px; line-height: 20px; letter-spacing: -.2px; }
```
